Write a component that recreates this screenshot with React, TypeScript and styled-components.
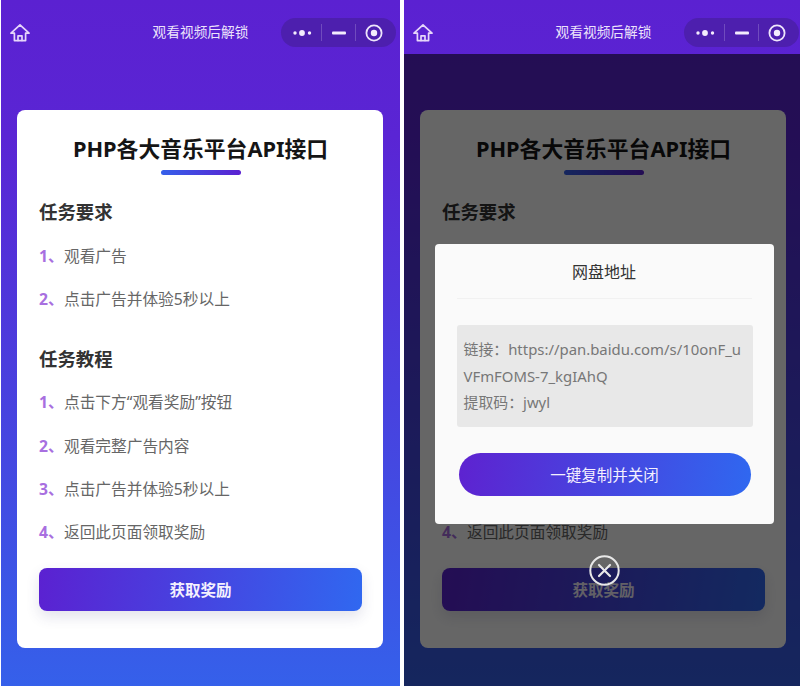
import React from "react";
import styled, { createGlobalStyle } from "styled-components";

const GlobalStyle = createGlobalStyle`
  html, body {
    margin: 0;
    padding: 0;
    background: #fff;
    font-family: "Noto Sans", "Noto Sans CJK SC", sans-serif;
  }
`;

const HomeIcon = () => (
  <svg width="20" height="20" viewBox="0 0 20 20" fill="none" stroke="#e6d6fa" strokeWidth="1.7" strokeLinejoin="round" strokeLinecap="round">
    <path d="M10 1.8 L19 10.2 L15.6 10.2 L15.6 17.6 L4.4 17.6 L4.4 10.2 L1 10.2 Z" />
    <path d="M8 17.4 V12.8 H12 V17.4" />
  </svg>
);

const CloseIcon = () => (
  <svg width="31" height="31" viewBox="0 0 31 31" fill="none" stroke="#e8e8e8" strokeLinecap="round">
    <circle cx="15.5" cy="15.5" r="14.2" strokeWidth="2" />
    <path d="M10 10 L21 21 M21 10 L10 21" strokeWidth="2.2" />
  </svg>
);

const Capsule = () => (
  <Pill>
    <svg width="19" height="8" viewBox="0 0 19 8" fill="#f3ecfd">
      <circle cx="2" cy="4" r="1.7" />
      <circle cx="9" cy="4" r="2.9" />
      <circle cx="16.5" cy="4" r="1.7" />
    </svg>
    <PillLine />
    <svg width="14" height="4" viewBox="0 0 14 4" fill="#f3ecfd">
      <rect width="14" height="2.8" y="0.6" rx="1" />
    </svg>
    <PillLine />
    <svg width="18" height="18" viewBox="0 0 18 18">
      <circle cx="9" cy="9" r="7.6" fill="none" stroke="#eee5fb" strokeWidth="1.8" />
      <circle cx="9" cy="9" r="3.2" fill="#f3ecfd" />
    </svg>
  </Pill>
);

const Screen = ({ children }: { children?: React.ReactNode }) => (
  <Phone>
    <Header>
      <HomeSlot>
        <HomeIcon />
      </HomeSlot>
      <HeaderTitle>观看视频后解锁</HeaderTitle>
      <Capsule />
    </Header>
    <Card>
      <CardTitle>PHP各大音乐平台API接口</CardTitle>
      <TitleBar />
      <SectionTitle>任务要求</SectionTitle>
      <StepList>
        <Step><StepNum>1、</StepNum>观看广告</Step>
        <Step><StepNum>2、</StepNum>点击广告并体验5秒以上</Step>
      </StepList>
      <SectionTitle>任务教程</SectionTitle>
      <StepList $second>
        <Step><StepNum>1、</StepNum>点击下方“观看奖励”按钮</Step>
        <Step><StepNum>2、</StepNum>观看完整广告内容</Step>
        <Step><StepNum>3、</StepNum>点击广告并体验5秒以上</Step>
        <Step><StepNum>4、</StepNum>返回此页面领取奖励</Step>
      </StepList>
      <RewardButton>获取奖励</RewardButton>
    </Card>
    {children}
  </Phone>
);

export default function App() {
  return (
    <Page>
      <GlobalStyle />
      <Screen />
      <Screen>
        <Overlay>
          <Modal>
            <ModalTitle>网盘地址</ModalTitle>
            <InfoBox>
              <InfoLine>链接：https://pan.baidu.com/s/10onF_uVFmFOMS-7_kgIAhQ</InfoLine>
              <InfoLine>提取码：jwyl</InfoLine>
            </InfoBox>
            <CopyButton>一键复制并关闭</CopyButton>
          </Modal>
          <CloseSlot>
            <CloseIcon />
          </CloseSlot>
        </Overlay>
      </Screen>
    </Page>
  );
}

const Page = styled.div`
  display: flex;
  gap: 4px;
  width: 800px;
  height: 686px;
  padding-left: 1px;
  box-sizing: border-box;
  overflow: hidden;
  background: #fff;
`;

const Phone = styled.div`
  position: relative;
  flex: 0 0 399px;
  height: 686px;
  overflow: hidden;
  background: linear-gradient(180deg, #5b21d1 0%, #5a25d4 20%, #3560ea 100%);
`;

const Header = styled.div`
  display: flex;
  align-items: center;
  height: 54px;
  padding: 11px 4px 0 9px;
  box-sizing: border-box;
`;

const HomeSlot = styled.div`
  display: flex;
  flex: 0 0 110px;
  height: 20px;
`;

const HeaderTitle = styled.div`
  flex: 1;
  margin-top: -1px;
  text-align: center;
  font-size: 13.7px;
  line-height: 20px;
  color: #ece2fb;
`;

const Pill = styled.div`
  display: flex;
  align-items: center;
  justify-content: space-between;
  flex: 0 0 115px;
  height: 29px;
  padding: 0 13px 0 12px;
  box-sizing: border-box;
  border-radius: 15px;
  background: #4d1fae;
`;

const PillLine = styled.div`
  width: 1px;
  height: 17px;
  background: rgba(255, 255, 255, 0.2);
`;

const Card = styled.div`
  display: flex;
  flex-direction: column;
  width: 366px;
  height: 538px;
  margin: 56px 0 0 16px;
  padding: 23px 21px 0 22px;
  box-sizing: border-box;
  border-radius: 8px;
  background: #fff;
`;

const CardTitle = styled.h1`
  margin: 0;
  height: 30px;
  line-height: 31px;
  text-align: center;
  font-size: 21.8px;
  font-weight: 700;
  color: #151515;
`;

const TitleBar = styled.div`
  align-self: center;
  width: 80px;
  height: 5px;
  margin-top: 7px;
  border-radius: 3px;
  background: linear-gradient(90deg, #3560ea, #5b21d1);
`;

const SectionTitle = styled.h2`
  margin: 22px 0 0;
  height: 28px;
  line-height: 30px;
  font-size: 18.4px;
  font-weight: 700;
  color: #333;

  & ~ & {
    margin-top: 24px;
  }
`;

const StepList = styled.div<{ $second?: boolean }>`
  display: flex;
  flex-direction: column;
  margin-top: ${({ $second }) => ($second ? "8px" : "9px")};
`;

const Step = styled.div`
  height: 43.2px;
  line-height: 45.2px;
  font-size: 15.7px;
  color: #666;
`;

const StepNum = styled.span`
  display: inline-block;
  width: 25px;
  font-weight: 700;
  color: #a86fe0;
`;

const RewardButton = styled.div`
  height: 43px;
  margin-top: 15px;
  line-height: 45px;
  text-align: center;
  font-size: 15.5px;
  font-weight: 700;
  color: #f4f0fe;
  border-radius: 8px;
  background: linear-gradient(100deg, #5b21d1, #3068f0);
  box-shadow: 0 6px 14px rgba(60, 60, 120, 0.14);
`;

const Overlay = styled.div`
  position: absolute;
  top: 54px;
  left: 0;
  right: 0;
  bottom: 0;
  display: flex;
  flex-direction: column;
  align-items: center;
  padding: 190px 0 0 1px;
  box-sizing: border-box;
  background: rgba(0, 0, 0, 0.6);
`;

const Modal = styled.div`
  display: flex;
  flex-direction: column;
  width: 339px;
  height: 280px;
  padding: 0 22px;
  box-sizing: border-box;
  border-radius: 4px;
  background: #fafafa;
`;

const ModalTitle = styled.div`
  height: 54px;
  line-height: 56px;
  text-align: center;
  font-size: 16px;
  color: #333;
  border-bottom: 1px solid #f1f1f1;
`;

const InfoBox = styled.div`
  margin-top: 26px;
  width: 296px;
  height: 102px;
  padding: 11px 7px;
  box-sizing: border-box;
  border-radius: 3px;
  background: #e8e8e8;
  font-size: 14.9px;
  line-height: 26.5px;
  color: #777;
`;

const InfoLine = styled.div`
  word-break: break-all;
`;

const CopyButton = styled.div`
  width: 292px;
  height: 43px;
  margin: 26px 0 0 2px;
  line-height: 45px;
  text-align: center;
  font-size: 15.5px;
  color: #f4f0fe;
  border-radius: 22px;
  background: linear-gradient(100deg, #5e22d0, #2f68f0);
`;

const CloseSlot = styled.div`
  display: flex;
  margin-top: 31px;
`;
